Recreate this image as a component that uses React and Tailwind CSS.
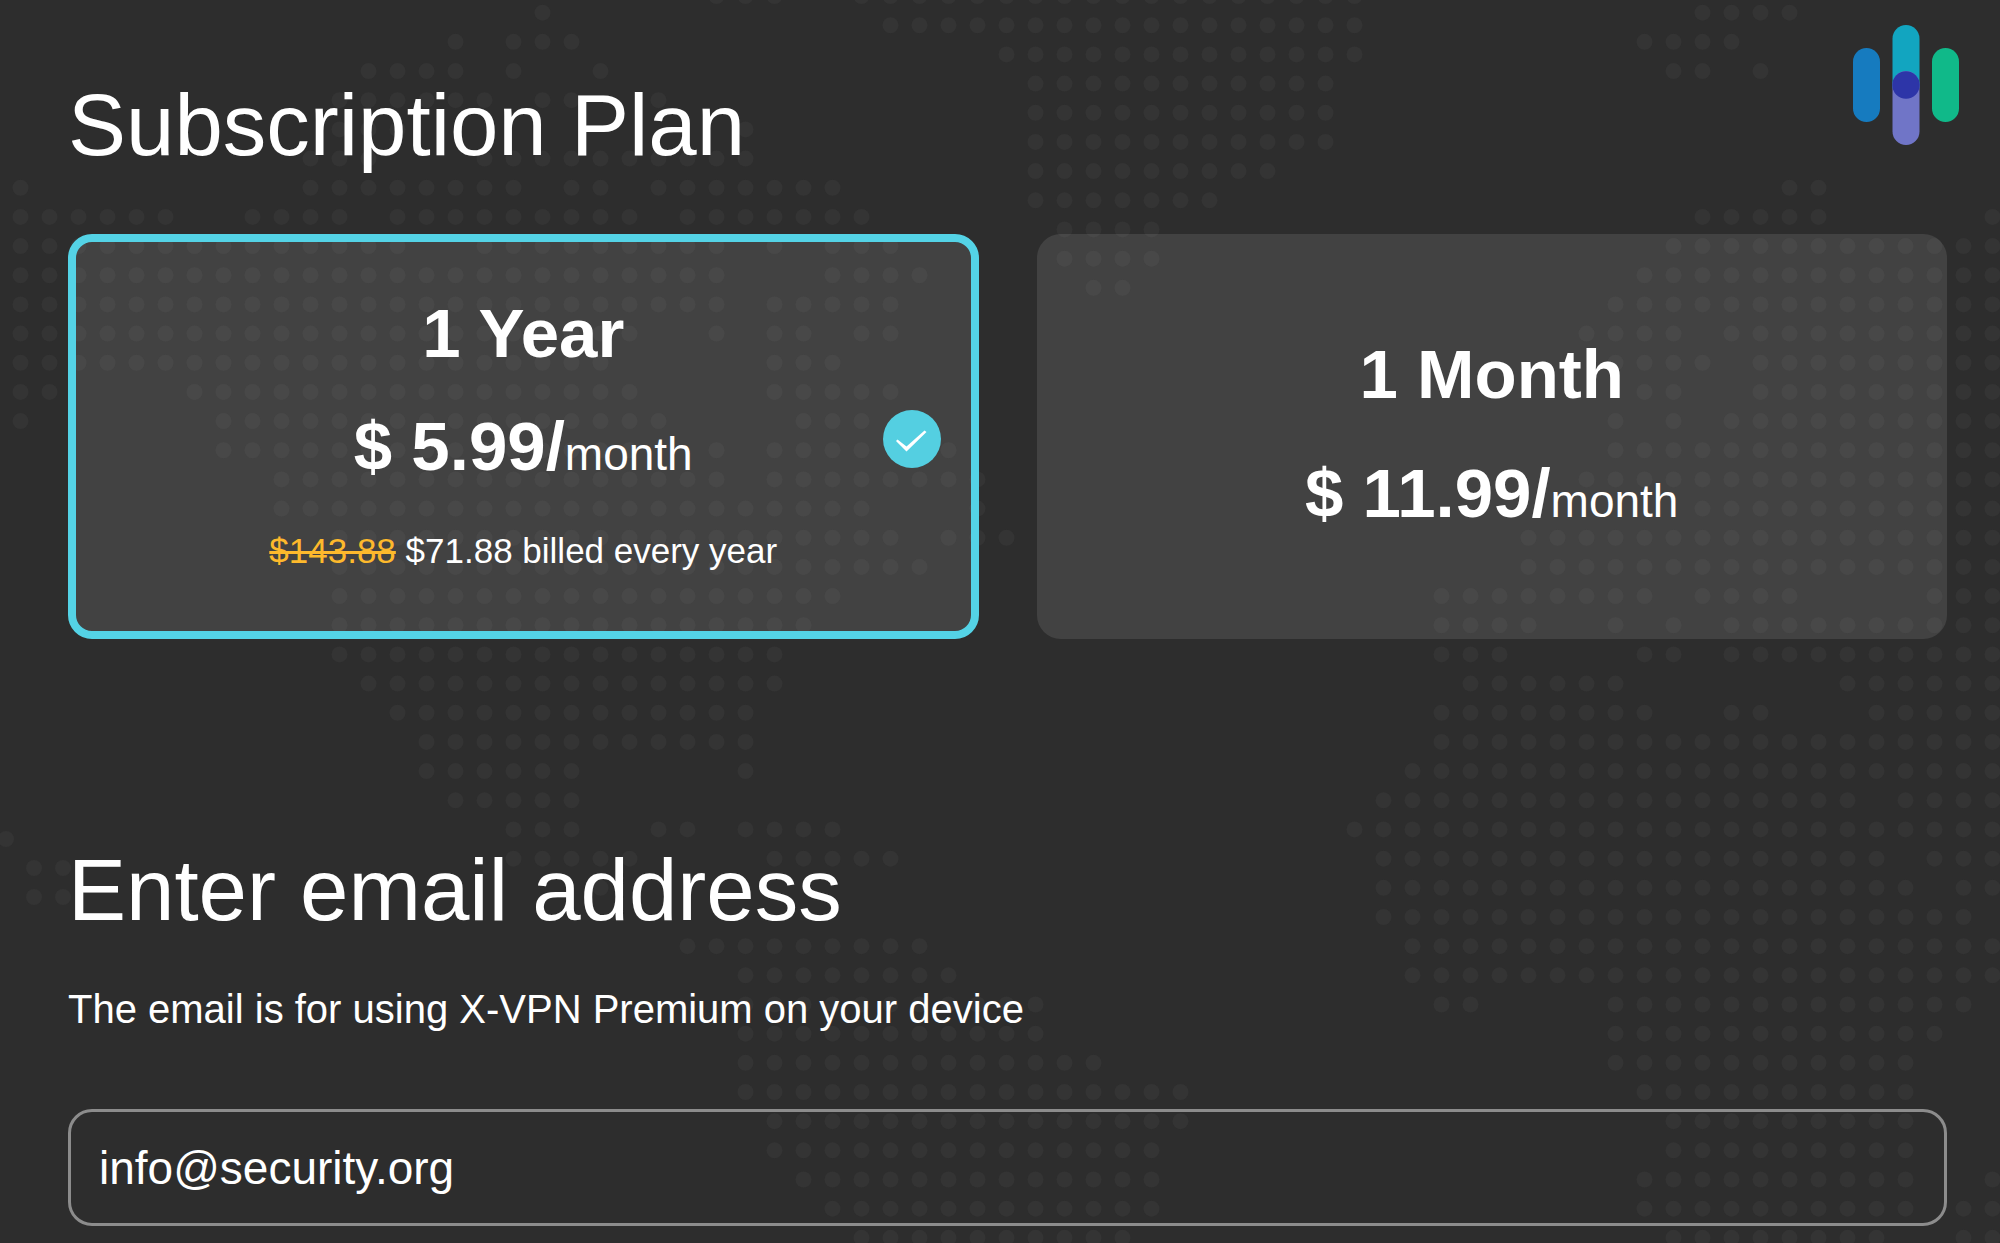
import React, { useState } from 'react';

// Each row lists [first, last] column ranges of the dotted world map
const mapRows = [
  [[18, 18], [58, 61]],
  [[15, 15], [17, 19], [56, 59]],
  [[12, 15], [17, 17], [20, 20], [57, 58], [60, 60]],
  [[11, 16], [18, 19], [22, 22]],
  [[11, 13], [25, 25]],
  [[10, 12], [16, 25]],
  [[0, 0], [10, 17], [19, 20], [22, 28], [61, 62]],
  [[0, 5], [8, 11], [13, 21], [23, 29], [58, 62], [68, 68]],
  [[0, 13], [16, 24], [26, 26], [28, 30], [57, 68]],
  [[0, 24], [28, 31], [56, 68]],
  [[0, 24], [26, 30], [55, 68]],
  [[0, 21], [24, 24], [26, 27], [29, 30], [54, 57], [59, 68]],
  [[0, 20], [26, 28], [55, 58], [60, 68]],
  [[0, 1], [6, 21], [26, 30], [56, 57], [60, 68]],
  [[0, 0], [7, 22], [27, 29], [55, 55], [57, 57], [59, 68]],
  [[7, 21], [24, 24], [26, 29], [32, 32], [55, 68]],
  [[9, 24], [26, 33], [54, 68]],
  [[9, 29], [33, 33], [58, 68]],
  [[11, 30], [32, 34], [52, 68]],
  [[11, 31], [52, 68]],
  [[11, 28], [49, 56], [58, 61], [66, 68]],
  [[11, 27], [49, 52], [55, 55], [57, 57], [59, 68]],
  [[11, 26], [49, 51], [56, 57], [59, 68]],
  [[12, 26], [50, 55], [63, 68]],
  [[13, 25], [49, 56], [59, 60], [64, 68]],
  [[14, 25], [49, 68]],
  [[14, 19], [25, 25], [48, 68]],
  [[15, 19], [47, 63], [65, 68]],
  [[17, 19], [22, 23], [25, 28], [46, 68]],
  [[17, 21], [26, 30], [47, 64], [66, 68]],
  [[20, 20], [47, 65], [67, 68]],
  [[47, 67]],
  [[23, 31], [48, 68]],
  [[25, 32], [48, 68]],
  [[25, 35], [49, 50], [55, 67]],
  [[25, 35], [55, 66]],
  [[25, 37], [55, 65]],
  [[25, 40], [56, 65]],
  [[26, 40], [57, 65]],
  [[26, 39], [57, 65]],
  [[27, 39], [56, 65], [68, 68]],
  [[28, 39], [56, 65], [67, 68]],
  [[29, 38], [57, 64], [67, 68]],
];

// Greenland sits on its own rows, half a step off the others
const greenlandRows = [
  [[24, 26], [29, 46]],
  [[30, 46]],
  [[34, 46]],
  [[35, 45]],
  [[35, 45]],
  [[35, 45]],
  [[35, 43]],
  [[35, 41]],
  [[36, 39]],
  [[36, 39]],
  [[37, 38]],
];

const islands = [[6, 839], [34, 868], [63, 868], [34, 897], [63, 897]];

const getDots = (rows, startY) =>
  rows.flatMap((ranges, row) =>
    ranges.flatMap(([from, to]) =>
      Array.from({ length: to - from + 1 }, (_, i) => [20.5 + (from + i) * 29, startY + row * 29.17])
    )
  );

const dots = [...getDots(mapRows, 12.7), ...getDots(greenlandRows, -3.9), ...islands];

const plans = [
  { id: 'year', name: '1 Year', price: '5.99', oldTotal: '$143.88', total: '$71.88 billed every year' },
  { id: 'month', name: '1 Month', price: '11.99' },
];

function WorldMap() {
  return (
    <svg
      className="absolute inset-0 h-full w-full"
      viewBox="0 0 2000 1243"
      preserveAspectRatio="xMidYMin slice"
      aria-hidden="true"
    >
      {dots.map(([x, y]) => (
        <circle key={`${x}-${y}`} cx={x} cy={y} r="8" fill="#343434" />
      ))}
    </svg>
  );
}

function Logo() {
  return (
    <svg className="absolute top-[25px] right-[41px] h-[120px] w-[106px]" viewBox="0 0 106 120" aria-hidden="true">
      <rect x="0" y="23" width="27" height="74" rx="13.5" fill="#167bbf" />
      <rect x="39.5" y="0" width="27" height="74" rx="13.5" fill="#12a5c0" />
      <rect x="39.5" y="46" width="27" height="74" rx="13.5" fill="#7075c7" />
      <circle cx="53" cy="60" r="13.7" fill="#2d35a8" />
      <rect x="79" y="23" width="27" height="74" rx="13.5" fill="#10b989" />
    </svg>
  );
}

function PlanCard({ plan, selected, onSelect }) {
  return (
    <label
      className={`relative flex min-h-[405px] cursor-pointer flex-col items-center justify-center rounded-3xl border-8 bg-white/10 pb-1 text-center ${
        selected ? 'border-[#54d3e6]' : 'border-transparent'
      }`}
    >
      <input
        type="radio"
        name="plan"
        value={plan.id}
        checked={selected}
        onChange={() => onSelect(plan.id)}
        className="sr-only"
      />
      <span className="text-[69px] leading-[80px] font-bold">{plan.name}</span>
      <span className={`text-[69px] leading-[80px] font-bold ${plan.total ? 'mt-[33px]' : 'mt-[39px]'}`}>
        $ {plan.price}/<span className="text-[46px] leading-none font-normal">month</span>
      </span>
      {plan.total && (
        <span className="mt-10 text-[35px] leading-[48px]">
          <s className="text-[#fdb92c]">{plan.oldTotal}</s> {plan.total}
        </span>
      )}
      {selected && (
        <svg className="absolute top-42 right-[30px] h-[58px] w-[58px]" viewBox="0 0 58 58" aria-hidden="true">
          <circle cx="29" cy="29" r="29" fill="#54cfe1" />
          <path d="M13 31l1.500-1.500 9 7L41.500 20.500l2 1.500L23.500 41.500z" fill="#fff" />
        </svg>
      )}
    </label>
  );
}

function App() {
  const [plan, setPlan] = useState('year');
  const [email, setEmail] = useState('info@security.org');

  return (
    <div className="relative min-h-screen overflow-hidden bg-[#2d2d2d] font-['Liberation_Sans',Arial,sans-serif] text-white">
      <WorldMap />
      <Logo />

      <main className="relative pt-[75px] pr-[53px] pb-4 pl-[68px]">
        <section>
          <h1 className="text-[87px] leading-[100px]">Subscription Plan</h1>
          <div className="mt-[59px] grid grid-cols-2 gap-[58px]">
            {plans.map((item) => (
              <PlanCard key={item.id} plan={item} selected={plan === item.id} onSelect={setPlan} />
            ))}
          </div>
        </section>

        <section className="mt-[201px]">
          <h2 className="text-[87px] leading-[100px]">
            <label htmlFor="email">Enter email address</label>
          </h2>
          <p className="mt-[45px] text-[40px] leading-[48px]">The email is for using X-VPN Premium on your device</p>
          <input
            id="email"
            type="email"
            value={email}
            onChange={(e) => setEmail(e.target.value)}
            className="mt-[76px] block h-[117px] w-full rounded-3xl border-3 border-[#8c8c8c] bg-transparent px-7 text-[46px] outline-none"
          />
        </section>
      </main>
    </div>
  );
}

export default App;
